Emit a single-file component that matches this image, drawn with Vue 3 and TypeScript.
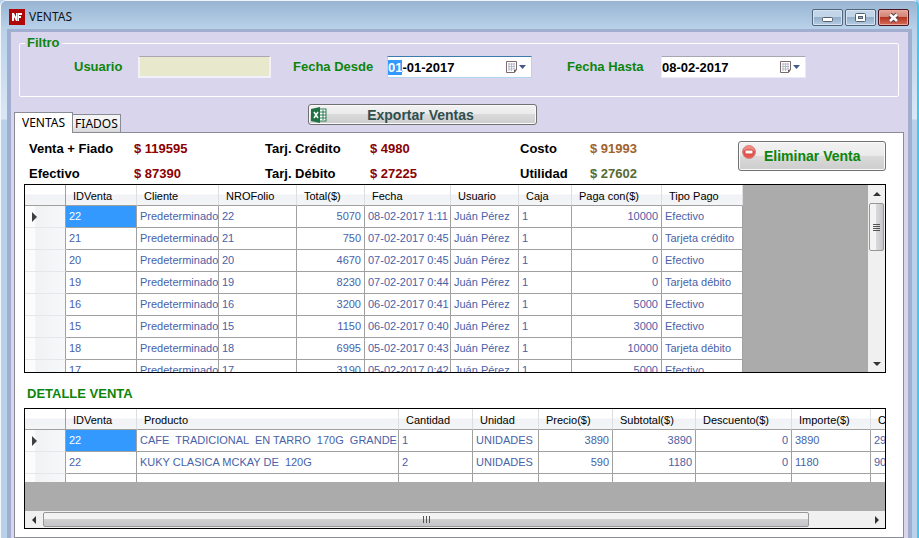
<script setup lang="ts">
import { onMounted, ref } from 'vue'

type Align = 'left' | 'right'
interface Column {
  title: string
  width: number
  align?: Align
}

const usuario = ref('')
const desde = ref('01-01-2017')
const hasta = ref('08-02-2017')
const desdeInput = ref<HTMLInputElement | null>(null)

const totals = [
  { label: 'Venta + Fiado', value: '$ 119595', tone: 'red' },
  { label: 'Tarj. Crédito', value: '$ 4980', tone: 'red' },
  { label: 'Costo', value: '$ 91993', tone: 'brown' },
  { label: 'Efectivo', value: '$ 87390', tone: 'red' },
  { label: 'Tarj. Débito', value: '$ 27225', tone: 'red' },
  { label: 'Utilidad', value: '$ 27602', tone: 'olive' },
]

const salesColumns: Column[] = [
  { title: 'IDVenta', width: 71 },
  { title: 'Cliente', width: 82 },
  { title: 'NROFolio', width: 78 },
  { title: 'Total($)', width: 68, align: 'right' },
  { title: 'Fecha', width: 86 },
  { title: 'Usuario', width: 68 },
  { title: 'Caja', width: 53 },
  { title: 'Paga con($)', width: 90, align: 'right' },
  { title: 'Tipo Pago', width: 81 },
]

const sale = (id: number, total: number, date: string, paid: number, kind: string): string[] => [
  `${id}`, 'Predeterminado', `${id}`, `${total}`, date, 'Juán Pérez', '1', `${paid}`, kind,
]

const sales = [
  sale(22, 5070, '08-02-2017 1:11', 10000, 'Efectivo'),
  sale(21, 750, '07-02-2017 0:45', 0, 'Tarjeta crédito'),
  sale(20, 4670, '07-02-2017 0:45', 0, 'Efectivo'),
  sale(19, 8230, '07-02-2017 0:44', 0, 'Tarjeta débito'),
  sale(16, 3200, '06-02-2017 0:41', 5000, 'Efectivo'),
  sale(15, 1150, '06-02-2017 0:40', 3000, 'Efectivo'),
  sale(18, 6995, '05-02-2017 0:43', 10000, 'Tarjeta débito'),
  sale(17, 3190, '05-02-2017 0:42', 5000, 'Efectivo'),
]

const detailColumns: Column[] = [
  { title: 'IDVenta', width: 71 },
  { title: 'Producto', width: 262 },
  { title: 'Cantidad', width: 74 },
  { title: 'Unidad', width: 66 },
  { title: 'Precio($)', width: 74, align: 'right' },
  { title: 'Subtotal($)', width: 83, align: 'right' },
  { title: 'Descuento($)', width: 96, align: 'right' },
  { title: 'Importe($)', width: 79 },
  { title: 'C', width: 80 },
]

const details = [
  ['22', 'CAFE  TRADICIONAL  EN TARRO  170G  GRANDE', '1', 'UNIDADES', '3890', '3890', '0', '3890', '29'],
  ['22', 'KUKY CLASICA MCKAY DE  120G', '2', 'UNIDADES', '590', '1180', '0', '1180', '90'],
  ['', '', '', '', '', '', '', '', ''],
]

onMounted(() => {
  desdeInput.value?.focus()
  desdeInput.value?.setSelectionRange(0, 2)
})
</script>

<template>
  <div class="window">
    <header class="titlebar">
      <svg class="logo" viewBox="0 0 16 16" aria-hidden="true">
        <rect width="16" height="16" fill="#b00808" />
        <path d="M3 12V4h2l2 4V4h6v2H10v1h2v2h-2v3H7L5 8v4z" fill="#fff" />
        <path d="M8.500 4v8" stroke="#e9a0a0" stroke-width="1" />
      </svg>
      <h1>VENTAS</h1>
      <div class="winbuttons">
        <button type="button" aria-label="Minimizar">
          <svg viewBox="0 0 29 15"><rect x="9.500" y="7.500" width="10" height="4" rx="1" fill="#fff" stroke="#56606c" /></svg>
        </button>
        <button type="button" aria-label="Maximizar">
          <svg viewBox="0 0 29 15">
            <rect x="9.500" y="3.500" width="10" height="8" rx="1" fill="#fff" stroke="#56606c" />
            <rect x="12.500" y="6.500" width="4" height="2" fill="#8fb0d0" stroke="#56606c" />
          </svg>
        </button>
        <button type="button" class="close" aria-label="Cerrar">
          <svg viewBox="0 0 29 15">
            <path d="M11 4.500l7 6.500M18 4.500l-7 6.500" stroke="#5a4048" stroke-width="4.600" />
            <path d="M11 4.500l7 6.500M18 4.500l-7 6.500" stroke="#fff" stroke-width="2.600" />
          </svg>
        </button>
      </div>
    </header>

    <main class="client">
      <fieldset class="filter">
        <legend>Filtro</legend>
        <div class="field user">
          <label for="usuario">Usuario</label>
          <input id="usuario" v-model="usuario" type="text" />
        </div>
        <div class="field from">
          <label for="desde">Fecha Desde</label>
          <div class="date active">
            <input id="desde" ref="desdeInput" v-model="desde" type="text" />
            <button type="button" aria-label="Abrir calendario">
              <svg viewBox="0 0 22 14">
                <path d="M1.500 1.500h10v8l-2 3h-8z" fill="#fff" stroke="#7b6a6a" />
                <path d="M3 4h7M3 6.500h7M3 9h7M4 3v8M6.500 3v8M9 3v6" stroke="#b4bcc8" />
                <path d="M12 9l-3 4V10z" fill="#6b5a5a" />
                <path d="M14 5h7l-3.500 4z" fill="#44598a" />
              </svg>
            </button>
          </div>
        </div>
        <div class="field to">
          <label for="hasta">Fecha Hasta</label>
          <div class="date">
            <input id="hasta" v-model="hasta" type="text" />
            <button type="button" aria-label="Abrir calendario">
              <svg viewBox="0 0 22 14">
                <path d="M1.500 1.500h10v8l-2 3h-8z" fill="#fff" stroke="#7b6a6a" />
                <path d="M3 4h7M3 6.500h7M3 9h7M4 3v8M6.500 3v8M9 3v6" stroke="#b4bcc8" />
                <path d="M12 9l-3 4V10z" fill="#6b5a5a" />
                <path d="M14 5h7l-3.500 4z" fill="#44598a" />
              </svg>
            </button>
          </div>
        </div>
      </fieldset>

      <div class="tabbar">
        <div class="tabs" role="tablist">
          <button type="button" role="tab" class="tab selected" aria-selected="true">VENTAS</button>
          <button type="button" role="tab" class="tab" aria-selected="false">FIADOS</button>
        </div>
        <button type="button" class="glossy export">
          <svg viewBox="0 0 16 16" aria-hidden="true">
            <rect x="8" y="2" width="7" height="12" fill="#fff" stroke="#2d7a50" />
            <path d="M9 5h6M9 8h6M9 11h6M12 3v10" stroke="#2d7a50" />
            <path d="M0 2l9-2v16l-9-2z" fill="#1f7244" />
            <path d="M3 5l4 6M7 5l-4 6" stroke="#fff" stroke-width="1.500" />
          </svg>
          <span>Exportar Ventas</span>
        </button>
      </div>

      <section class="page" role="tabpanel">
        <div class="summary">
          <dl class="totals">
            <div v-for="t in totals" :key="t.label" class="total">
              <dt>{{ t.label }}</dt>
              <dd :class="t.tone">{{ t.value }}</dd>
            </div>
          </dl>
          <button type="button" class="glossy delete">
            <svg viewBox="0 0 16 16" aria-hidden="true">
              <circle cx="8" cy="8" r="6.500" fill="#e8564e" stroke="#d08a88" />
              <path d="M2.500 7a5.500 5.500 0 0 1 11 0z" fill="#f08a80" />
              <rect x="4" y="6" width="8" height="4" rx="1" fill="#fff" stroke="#c8443e" />
            </svg>
            <span>Eliminar Venta</span>
          </button>
        </div>

        <div class="grid sales">
          <div class="viewport">
            <table>
              <colgroup>
                <col class="rowhead" />
                <col v-for="c in salesColumns" :key="c.title" :style="{ width: c.width + 'px' }" />
              </colgroup>
              <thead>
                <tr>
                  <th></th>
                  <th v-for="c in salesColumns" :key="c.title" scope="col">{{ c.title }}</th>
                </tr>
              </thead>
              <tbody>
                <tr v-for="(row, r) in sales" :key="r">
                  <th><i v-if="r === 0" class="marker"></i></th>
                  <td
                    v-for="(cell, c) in row"
                    :key="c"
                    :class="{ right: salesColumns[c].align === 'right', current: r === 0 && c === 0 }"
                  >{{ cell }}</td>
                </tr>
              </tbody>
            </table>
          </div>
          <div class="vscroll">
            <button type="button" aria-label="Subir"><i class="arrow up"></i></button>
            <div class="thumb"><i></i><i></i><i></i><i></i></div>
            <button type="button" class="last" aria-label="Bajar"><i class="arrow down"></i></button>
          </div>
        </div>

        <h2>DETALLE VENTA</h2>

        <div class="grid detail">
          <div class="viewport">
            <table>
              <colgroup>
                <col class="rowhead" />
                <col v-for="c in detailColumns" :key="c.title" :style="{ width: c.width + 'px' }" />
              </colgroup>
              <thead>
                <tr>
                  <th></th>
                  <th v-for="c in detailColumns" :key="c.title" scope="col">{{ c.title }}</th>
                </tr>
              </thead>
              <tbody>
                <tr v-for="(row, r) in details" :key="r">
                  <th><i v-if="r === 0" class="marker"></i></th>
                  <td
                    v-for="(cell, c) in row"
                    :key="c"
                    :class="{ right: detailColumns[c].align === 'right', current: r === 0 && c === 0 }"
                  >{{ cell }}</td>
                </tr>
              </tbody>
            </table>
          </div>
          <div class="filler"></div>
          <div class="hscroll">
            <button type="button" aria-label="Izquierda"><i class="arrow left"></i></button>
            <div class="track"><div class="thumb"><i></i><i></i><i></i></div></div>
            <button type="button" aria-label="Derecha"><i class="arrow next"></i></button>
          </div>
        </div>
      </section>
    </main>
  </div>
</template>

<style>
body {
  margin: 0;
  background: #b9d1ea;
}
</style>

<style scoped>
* {
  box-sizing: border-box;
}
.window {
  min-height: 100vh;
  display: flex;
  flex-direction: column;
  padding: 0 5px 0 6px;
  border-left: 1px solid #f4f8fc;
  border-right: 2px solid #3fc8f0;
  border-top: 1px solid #eef4fa;
  border-top-left-radius: 6px;
  border-top-right-radius: 6px;
  background: linear-gradient(#98b4d2 0, #b9d2ea 28px, #d9e8f6 118px, #b9d1ea 119px);
  font: bold 13px/16px "Liberation Sans", Arial, sans-serif;
  color: #000;
}
button {
  font: inherit;
  margin: 0;
  padding: 0;
  border: 0;
  background: none;
}
.titlebar {
  height: 28px;
  display: flex;
  align-items: center;
  gap: 4px;
  padding: 4px 3px 0 2px;
}
.logo {
  width: 16px;
  height: 16px;
}
h1 {
  flex: 1;
  margin: 0;
  font: 12px/16px "Noto Sans", sans-serif;
  color: #10151c;
}
.winbuttons {
  display: flex;
  gap: 2px;
}
.winbuttons button {
  width: 31px;
  height: 17px;
  border: 1px solid #53657c;
  border-radius: 2px;
  box-shadow: inset 0 0 0 1px #d6e4f2;
  background: linear-gradient(#c3d5e8 0 48%, #94afcb 50%, #b4cde4);
}
.winbuttons svg {
  display: block;
  width: 29px;
  height: 15px;
}
.winbuttons .close {
  border-color: #4c1620;
  box-shadow: inset 0 0 0 1px #eaa8a0;
  background: linear-gradient(#e4a79c 0, #d28272 48%, #b53420 50%, #d4705c);
}
.client {
  flex: 1;
  display: flex;
  flex-direction: column;
  border: solid #a1aecf;
  border-width: 3px 4px 0;
  background: #d9d5ed;
  padding: 3px 3px 0;
}
.filter {
  height: 62px;
  margin: 0 6px 0 5px;
  padding: 5px 0 0;
  border: 1px solid #fff;
  border-radius: 2px;
  display: flex;
  align-items: flex-start;
  color: #0c850c;
}
.filter legend {
  margin-left: 5px;
  padding: 0 2px;
}
.field {
  display: flex;
  align-items: center;
}
.user {
  margin-left: 54px;
}
.from {
  margin-left: 22px;
}
.to {
  margin-left: 35px;
}
.user label {
  width: 64px;
}
.from label,
.to label {
  width: 94px;
}
.user input {
  width: 133px;
  height: 22px;
  border: 2px solid #f2f0fa;
  border-top: 1px solid #aaa6b4;
  background: #e8e8cd;
}
.field input {
  font: inherit;
  padding: 0 0 0 1px;
  outline: none;
}
.date {
  width: 145px;
  height: 22px;
  display: flex;
  align-items: center;
  background: #fff;
  border: 1px solid #eceaf6;
  border-top-color: #a9a6b3;
}
.date.active {
  border-color: #b4d4ee;
  border-top-color: #3d7bad;
}
.date input {
  flex: 1;
  min-width: 0;
  height: 18px;
  border: 0;
  padding-left: 0;
  background: none;
  color: #000;
  caret-color: transparent;
}
.date input::selection {
  background: #3399ff;
  color: #fff;
}
.date button {
  width: 22px;
  height: 14px;
  margin-right: 4px;
}
.date svg {
  display: block;
  width: 22px;
  height: 14px;
}
.tabbar {
  height: 35px;
  display: flex;
  align-items: flex-end;
}
.tabs {
  display: flex;
  align-items: flex-end;
  width: 294px;
}
.tab {
  height: 18px;
  padding: 0 2px;
  border: 1px solid #898c95;
  border-left: 0;
  border-bottom: 0;
  background: linear-gradient(#f4f4f4 50%, #d6d6d6);
  font: 12px/18px "Noto Sans", sans-serif;
}
.tab.selected {
  height: 21px;
  padding: 0 7px;
  margin-bottom: -1px;
  border-left: 1px solid #898c95;
  background: #fff;
  z-index: 1;
}
.glossy {
  display: flex;
  align-items: center;
  border: 1px solid #707070;
  border-radius: 3px;
  box-shadow: inset 0 0 0 1px #fafafa;
  background: linear-gradient(#f2f2f2 0, #ebebeb 48%, #dadada 50%, #cdcdcd);
  font-size: 14px;
}
.glossy svg {
  width: 16px;
  height: 16px;
}
.export {
  width: 229px;
  height: 21px;
  margin-bottom: 7px;
  padding: 0 2px;
  color: #2f4f4f;
}
.export span {
  flex: 1;
  padding-right: 20px;
}
.page {
  flex: 1;
  background: #fff;
  border: 1px solid #898c95;
  margin-right: 1px;
  padding: 8px 17px 8px 9px;
}
.summary {
  display: flex;
  justify-content: space-between;
  height: 43px;
}
.totals {
  margin: 0;
  padding-left: 5px;
  display: grid;
  grid-template-columns: 236px 255px 160px;
  grid-auto-rows: 16px;
  row-gap: 9px;
  white-space: nowrap;
}
.total {
  display: grid;
  grid-template-columns: 105px auto;
  justify-content: start;
}
.total:nth-child(3n) {
  grid-template-columns: 70px auto;
}
dd {
  margin: 0;
}
.red {
  color: #8b0000;
}
.brown {
  color: #a0622d;
}
.olive {
  color: #556b2f;
}
.delete {
  width: 148px;
  height: 30px;
  gap: 7px;
  padding: 0 2px;
  color: #0c850c;
}
.delete svg {
  align-self: flex-start;
  margin-top: 2px;
}
.grid {
  border: 1px solid #000;
  background: #ababab;
  font: 11px/21px "Liberation Sans", Arial, sans-serif;
}
.sales {
  height: 189px;
  display: flex;
}
.viewport {
  overflow: hidden;
}
.sales .viewport {
  flex: 1;
  min-width: 0;
}
table {
  table-layout: fixed;
  border-collapse: separate;
  border-spacing: 0;
}
.rowhead {
  width: 41px;
}
.sales table {
  width: 718px;
}
.detail table {
  width: 926px;
}
th,
td {
  height: 22px;
  padding: 0 3px;
  overflow: hidden;
  white-space: pre;
  border-right: 1px solid #a0a0a0;
  border-bottom: 1px solid #a0a0a0;
  line-height: 21px;
}
td {
  background: #fff;
  color: #4862a8;
}
th {
  font-weight: normal;
  text-align: left;
}
thead th {
  height: 21px;
  padding: 2px 6px 0 7px;
  line-height: 18px;
  border-right-color: #dcdee2;
  background: linear-gradient(#fff 0 45%, #f1f2f5 50%, #f4f5f7);
}
thead th:first-child,
tbody th {
  border-right-color: #a0a0a0;
}
tbody th {
  background: linear-gradient(90deg, #fcfcfd 0 25%, #f1f2f4 27%, #f7f8fa);
  border-bottom-color: #e6e7ea;
  padding-left: 7px;
}
.right {
  text-align: right;
}
.current {
  background: #3399ff;
  color: #fff;
}
.marker {
  display: block;
  border: solid transparent;
  border-width: 5px 0 5px 5px;
  border-left-color: #404040;
}
.vscroll {
  width: 17px;
  display: flex;
  flex-direction: column;
  background: #f0f0f0;
}
.vscroll button {
  height: 17px;
  display: grid;
  place-items: center;
}
.vscroll .last {
  margin-top: auto;
}
.vscroll .thumb {
  height: 48px;
  margin: 1px;
  display: flex;
  flex-direction: column;
  align-items: center;
  justify-content: center;
  gap: 1px;
  border: 1px solid #979797;
  border-radius: 2px;
  background: linear-gradient(90deg, #f3f3f3 0 45%, #d9d9dc 50%, #c6c6ca);
}
.vscroll .thumb i {
  width: 7px;
  height: 1px;
  background: #555;
}
.arrow {
  width: 0;
  height: 0;
  border: 4px solid transparent;
}
.up {
  border-top: 0;
  border-bottom-color: #333;
}
.down {
  border-bottom: 0;
  border-top-color: #333;
}
.left {
  border-left: 0;
  border-right-color: #333;
}
.next {
  border-right: 0;
  border-left-color: #333;
}
h2 {
  margin: 13px 0 6px 3px;
  font: bold 13px/16px "Liberation Sans", Arial, sans-serif;
  color: #0c850c;
}
.detail {
  display: flex;
  flex-direction: column;
}
.detail .viewport {
  height: 73px;
}
.filler {
  height: 29px;
}
.hscroll {
  height: 17px;
  display: flex;
  background: #f0f0f0;
}
.hscroll button {
  width: 17px;
  display: grid;
  place-items: center;
}
.track {
  flex: 1;
  padding: 1px;
}
.hscroll .thumb {
  width: 93%;
  height: 15px;
  display: flex;
  align-items: center;
  justify-content: center;
  gap: 2px;
  border: 1px solid #979797;
  border-radius: 2px;
  background: linear-gradient(#f3f3f3 0 45%, #d0d0d2 50%, #c6c6ca);
}
.hscroll .thumb i {
  width: 1px;
  height: 7px;
  background: #555;
}
</style>
